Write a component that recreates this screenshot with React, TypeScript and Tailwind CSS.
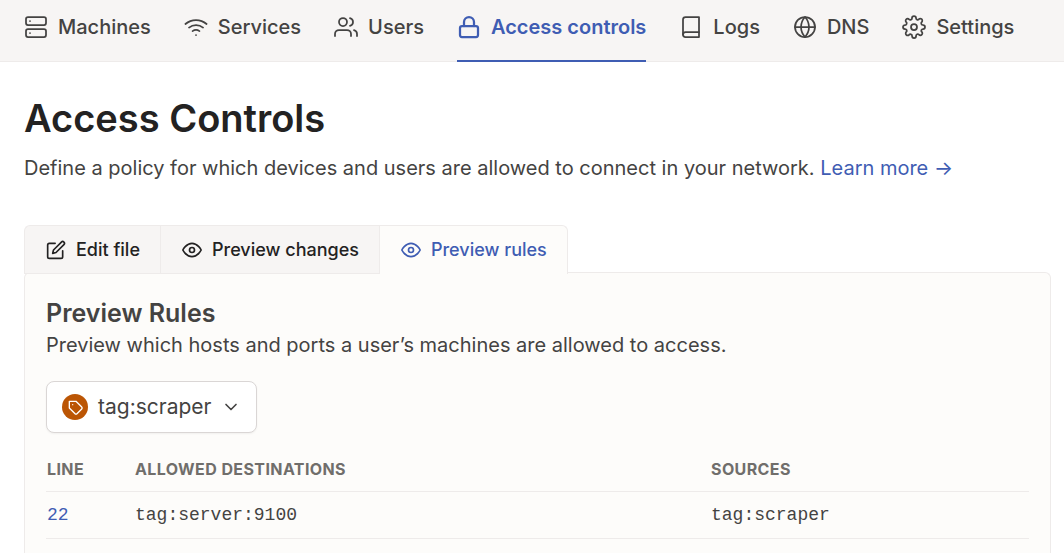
import type { ReactNode } from "react";

type IconProps = { children: ReactNode; className?: string; strokeWidth?: number };

function Icon({ children, className = "size-6", strokeWidth = 2 }: IconProps) {
  return (
    <svg
      viewBox="0 0 24 24"
      fill="none"
      stroke="currentColor"
      strokeWidth={strokeWidth}
      strokeLinecap="round"
      strokeLinejoin="round"
      aria-hidden="true"
      className={`shrink-0 ${className}`}
    >
      {children}
    </svg>
  );
}

const eye = (
  <>
    <path d="M1 12s4-8 11-8 11 8 11 8-4 8-11 8-11-8-11-8z" />
    <circle cx="12" cy="12" r="3" />
  </>
);

const navItems: { label: string; icon: ReactNode; active?: boolean }[] = [
  {
    label: "Machines",
    icon: (
      <>
        <rect x="2" y="2" width="20" height="8" rx="2" />
        <rect x="2" y="14" width="20" height="8" rx="2" />
        <path d="M6 6h.01M6 18h.01" />
      </>
    ),
  },
  {
    label: "Services",
    icon: (
      <>
        <path d="M5 12.55a11 11 0 0 1 14.08 0" />
        <path d="M1.42 9a16 16 0 0 1 21.16 0" />
        <path d="M8.53 16.11a6 6 0 0 1 6.95 0" />
        <path d="M12 20h.01" />
      </>
    ),
  },
  {
    label: "Users",
    icon: (
      <>
        <path d="M17 21v-2a4 4 0 0 0-4-4H5a4 4 0 0 0-4 4v2" />
        <circle cx="9" cy="7" r="4" />
        <path d="M23 21v-2a4 4 0 0 0-3-3.87" />
        <path d="M16 3.13a4 4 0 0 1 0 7.75" />
      </>
    ),
  },
  {
    label: "Access controls",
    active: true,
    icon: (
      <>
        <rect x="3" y="11" width="18" height="11" rx="2" />
        <path d="M7 11V7a5 5 0 0 1 10 0v4" />
      </>
    ),
  },
  {
    label: "Logs",
    icon: (
      <>
        <path d="M4 19.5A2.5 2.5 0 0 1 6.5 17H20" />
        <path d="M6.5 2H20v20H6.5A2.5 2.5 0 0 1 4 19.5v-15A2.5 2.5 0 0 1 6.5 2z" />
      </>
    ),
  },
  {
    label: "DNS",
    icon: (
      <>
        <circle cx="12" cy="12" r="10" />
        <path d="M2 12h20" />
        <path d="M12 2a15.3 15.3 0 0 1 4 10 15.3 15.3 0 0 1-4 10 15.3 15.3 0 0 1-4-10 15.3 15.3 0 0 1 4-10z" />
      </>
    ),
  },
  {
    label: "Settings",
    icon: (
      <>
        <circle cx="12" cy="12" r="3" />
        <path d="M19.4 15a1.65 1.65 0 0 0 .33 1.82l.06.06a2 2 0 0 1 0 2.83 2 2 0 0 1-2.83 0l-.06-.06a1.65 1.65 0 0 0-1.82-.33 1.65 1.65 0 0 0-1 1.51V21a2 2 0 0 1-2 2 2 2 0 0 1-2-2v-.09A1.65 1.65 0 0 0 9 19.4a1.65 1.65 0 0 0-1.82.33l-.06.06a2 2 0 0 1-2.83 0 2 2 0 0 1 0-2.83l.06-.06a1.65 1.65 0 0 0 .33-1.82 1.65 1.65 0 0 0-1.51-1H3a2 2 0 0 1-2-2 2 2 0 0 1 2-2h.09A1.65 1.65 0 0 0 4.6 9a1.65 1.65 0 0 0-.33-1.82l-.06-.06a2 2 0 0 1 0-2.83 2 2 0 0 1 2.83 0l.06.06a1.65 1.65 0 0 0 1.82.33H9a1.65 1.65 0 0 0 1-1.51V3a2 2 0 0 1 2-2 2 2 0 0 1 2 2v.09a1.65 1.65 0 0 0 1 1.51 1.65 1.65 0 0 0 1.82-.33l.06-.06a2 2 0 0 1 2.83 0 2 2 0 0 1 0 2.83l-.06.06a1.65 1.65 0 0 0-.33 1.82V9a1.65 1.65 0 0 0 1.51 1H21a2 2 0 0 1 2 2 2 2 0 0 1-2 2h-.09a1.65 1.65 0 0 0-1.51 1z" />
      </>
    ),
  },
];

const rules = [{ line: 22, destinations: "tag:server:9100", sources: "tag:scraper" }];

const headCell = "px-px pb-3 text-left text-base leading-5 font-bold tracking-wide uppercase text-[#706e6b]";

export default function App() {
  return (
    <div className="flex min-h-screen flex-col overflow-hidden bg-white font-[Inter,sans-serif] text-[#444342]">
      <header className="border-b border-[#eeebea] bg-[#f7f5f4] px-6">
        <nav className="-mb-px flex gap-[33px]">
          {navItems.map((item) => (
            <a
              key={item.label}
              href="#"
              aria-current={item.active ? "page" : undefined}
              className={`flex items-center gap-2.5 border-b-2 pt-[13px] pb-[19px] text-xl leading-7 whitespace-nowrap ${
                item.active ? "border-[#3f5db3] font-semibold text-[#3f5db3]" : "border-transparent font-medium"
              }`}
            >
              <Icon strokeWidth={item.active ? 2.25 : 1.75}>{item.icon}</Icon>
              {item.label}
            </a>
          ))}
        </nav>
      </header>

      <main className="flex flex-1 flex-col pt-8 pr-[13px] pl-6">
        <h1 className="text-[38px] leading-12 font-semibold text-[#232222]">Access Controls</h1>
        <p className="mt-2.5 text-xl leading-8">
          Define a policy for which devices and users are allowed to connect in your network.{" "}
          <a href="#" className="text-[#3f5db3]">
            Learn more →
          </a>
        </p>

        <div className="relative z-10 mt-[41px] flex text-lg leading-6 font-medium" role="tablist">
          <button
            type="button"
            role="tab"
            aria-selected="false"
            className="flex h-[49px] items-center gap-2.5 rounded-tl-md border border-r-0 border-[#eeebea] bg-[#f7f5f4] pr-5 pl-[21px] text-[#232222]"
          >
            <Icon className="size-5">
              <path d="M11 4H4a2 2 0 0 0-2 2v14a2 2 0 0 0 2 2h14a2 2 0 0 0 2-2v-7" />
              <path d="M18.5 2.5a2.121 2.121 0 0 1 3 3L12 15l-4 1 1-4 9.5-9.5z" />
            </Icon>
            Edit file
          </button>
          <button
            type="button"
            role="tab"
            aria-selected="false"
            className="flex h-[49px] items-center gap-2.5 border border-[#eeebea] bg-[#f7f5f4] pr-5 pl-[21px] text-[#232222]"
          >
            <Icon className="size-5">{eye}</Icon>
            Preview changes
          </button>
          <button
            type="button"
            role="tab"
            aria-selected="true"
            className="flex h-[49px] items-center gap-2.5 rounded-tr-md border border-b-0 border-l-0 border-[#eeebea] bg-[#fdfcfa] pr-5 pl-[21px] text-[#3f5db3]"
          >
            <Icon className="size-5">{eye}</Icon>
            Preview rules
          </button>
        </div>

        <section className="-mt-0.5 flex-1 rounded-t-md border border-b-0 border-[#eeebea] bg-[#fdfcfa] px-[21px] pt-6">
          <h2 className="text-[25px] leading-8 font-semibold">Preview Rules</h2>
          <p className="text-xl leading-8">Preview which hosts and ports a user’s machines are allowed to access.</p>

          <button
            type="button"
            className="mt-5 flex h-13 items-center gap-2.5 rounded-lg border border-[#dad6d5] bg-white px-[15px] text-[21px] leading-8 shadow-xs"
          >
            <span className="flex size-6.5 items-center justify-center rounded-full bg-[#bb5504] pt-0.5 pl-0.5 text-white">
              <Icon className="size-4">
                <path d="M20.59 13.41l-7.17 7.17a2 2 0 0 1-2.83 0L2 12V2h10l8.59 8.59a2 2 0 0 1 0 2.82z" />
                <path d="M7 7h.01" />
              </Icon>
            </span>
            tag:scraper
            <Icon className="size-5">
              <path d="m6 9 6 6 6-6" />
            </Icon>
          </button>

          <table className="mt-[26px] w-full table-fixed border-collapse">
            <thead>
              <tr className="border-b border-[#eeebea]">
                <th className={`w-22 ${headCell}`}>Line</th>
                <th className={headCell}>Allowed destinations</th>
                <th className={`w-[319px] ${headCell}`}>Sources</th>
              </tr>
            </thead>
            <tbody className="font-['Liberation_Mono',monospace] text-lg leading-6">
              {rules.map((rule) => (
                <tr key={rule.line} className="border-b border-[#eeebea]">
                  <td className="px-px py-[11px]">
                    <a href="#" className="text-[#3f5db3]">
                      {rule.line}
                    </a>
                  </td>
                  <td className="px-px">{rule.destinations}</td>
                  <td className="px-px">{rule.sources}</td>
                </tr>
              ))}
            </tbody>
          </table>
        </section>
      </main>
    </div>
  );
}
